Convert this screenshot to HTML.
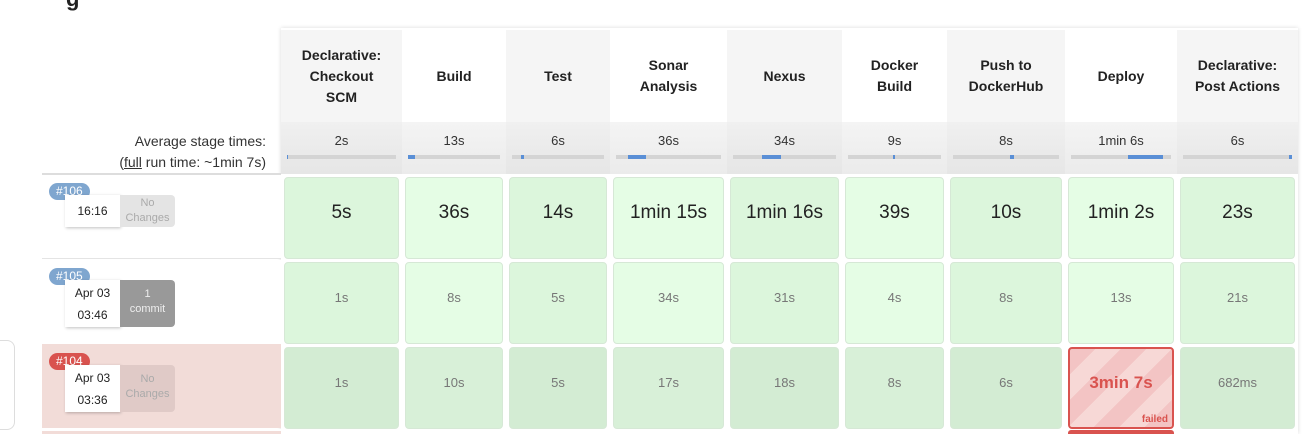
<!DOCTYPE html>
<html><head><meta charset="utf-8"><style>
*{box-sizing:border-box;margin:0;padding:0}
body{width:1316px;height:434px;overflow:hidden;background:#fff;font-family:"Liberation Sans","DejaVu Sans",sans-serif;position:relative;color:#333}
.abs{position:absolute}
.hd{position:absolute;top:30px;height:92px;display:flex;align-items:center;justify-content:center;text-align:center;font-weight:bold;font-size:14px;line-height:21px;color:#222}
.avg{position:absolute;top:122px;height:52px;text-align:center;font-size:13px;padding-top:11px;color:#333;background:linear-gradient(#f0f0f0,#e6e6e6)}
.bar{position:absolute;left:6px;right:6px;top:33px;height:4px;background:#d4d4d4}
.bar i{position:absolute;top:0;height:4px;background:#5a8fd6}
.c{position:absolute;border:1px solid #d6e8d6;border-radius:4px;display:flex;align-items:center;justify-content:center;color:#777;font-size:13px;padding-bottom:11px}
.big{font-size:19px;color:#222}
.row{position:absolute;left:42px;width:239px}
.badge{position:absolute;left:49px;height:17px;border-radius:9px;color:#fff;font-size:12px;padding:1px 7px;line-height:15px}
.date{position:absolute;left:65px;width:55px;background:#fff;box-shadow:1px 1px 3px rgba(0,0,0,.25);text-align:center;font-size:11px;color:#222}
.chg{position:absolute;left:120px;width:55px;border-radius:0 4px 4px 0;text-align:center;font-size:11px;line-height:15px}
</style></head><body>
<div class="abs" style="left:66px;top:-14px;width:30px;height:20px;font-size:22px;font-weight:bold;color:#222">g</div>
<div class="abs" style="left:281px;top:28px;width:1017px;height:406px;box-shadow:0 0 4px rgba(0,0,0,.15)"></div>

<div class="hd" style="left:281px;width:121px;background:#f5f5f5">Declarative:<br>Checkout<br>SCM</div>
<div class="hd" style="left:402px;width:104px;background:#fff">Build</div>
<div class="hd" style="left:506px;width:104px;background:#f5f5f5">Test</div>
<div class="hd" style="left:610px;width:117px;background:#fff">Sonar<br>Analysis</div>
<div class="hd" style="left:727px;width:115px;background:#f5f5f5">Nexus</div>
<div class="hd" style="left:842px;width:105px;background:#fff">Docker<br>Build</div>
<div class="hd" style="left:947px;width:118px;background:#f5f5f5">Push to<br>DockerHub</div>
<div class="hd" style="left:1065px;width:112px;background:#fff">Deploy</div>
<div class="hd" style="left:1177px;width:121px;background:#f5f5f5">Declarative:<br>Post Actions</div>

<div class="abs" style="left:60px;top:131px;width:206px;text-align:right;font-size:14px;line-height:21px;color:#333">Average stage times:<br>(<u>full</u> run time: ~1min 7s)</div>
<div class="abs" style="left:42px;top:173px;width:239px;height:2px;background:#ddd"></div>

<div class="avg" style="left:281px;width:121px">2s<div class="bar"><i style="left:0;width:1%"></i></div></div>
<div class="avg" style="left:402px;width:104px;background:linear-gradient(#f4f4f4,#ebebeb)">13s<div class="bar"><i style="left:0;width:8%"></i></div></div>
<div class="avg" style="left:506px;width:104px">6s<div class="bar"><i style="left:10%;width:3%"></i></div></div>
<div class="avg" style="left:610px;width:117px;background:linear-gradient(#f4f4f4,#ebebeb)">36s<div class="bar"><i style="left:11%;width:18%"></i></div></div>
<div class="avg" style="left:727px;width:115px">34s<div class="bar"><i style="left:28%;width:19%"></i></div></div>
<div class="avg" style="left:842px;width:105px;background:linear-gradient(#f4f4f4,#ebebeb)">9s<div class="bar"><i style="left:48%;width:3%"></i></div></div>
<div class="avg" style="left:947px;width:118px">8s<div class="bar"><i style="left:54%;width:4%"></i></div></div>
<div class="avg" style="left:1065px;width:112px;background:linear-gradient(#f4f4f4,#ebebeb)">1min 6s<div class="bar"><i style="left:57%;width:35%"></i></div></div>
<div class="avg" style="left:1177px;width:121px">6s<div class="bar"><i style="left:97%;width:3%"></i></div></div>

<div class="row" style="top:175px;height:84px;background:#fff;border-bottom:1px solid #e4e4e4"></div>
<div class="row" style="top:260px;height:84px;background:#fff"></div>
<div class="row" style="top:344px;height:84px;background:#f2dcd8"></div>
<div class="row" style="top:429px;height:5px;background:#f2dcd8;border-top:2px solid #fff"></div>
<div class="abs" style="left:-10px;top:340px;width:25px;height:90px;border:1px solid #ddd;border-radius:8px"></div>

<div class="badge" style="top:183px;background:#7fa6cf">#106</div>
<div class="date" style="top:195px;height:32px;line-height:32px;font-size:12px">16:16</div>
<div class="chg" style="top:195px;height:32px;background:#e4e4e4;color:#aaa;padding-top:1px">No<br>Changes</div>

<div class="badge" style="top:268px;background:#7fa6cf">#105</div>
<div class="date" style="top:280px;height:47px;line-height:22px;padding-top:2px;font-size:12px">Apr 03<br>03:46</div>
<div class="chg" style="top:280px;height:47px;background:#999;color:#eee;padding-top:7px">1<br>commit</div>

<div class="badge" style="top:353px;background:#d9534f">#104</div>
<div class="date" style="top:365px;height:47px;line-height:22px;padding-top:2px;font-size:12px">Apr 03<br>03:36</div>
<div class="chg" style="top:365px;height:47px;background:#e0cac7;color:#aaa;padding-top:7px">No<br>Changes</div>

<div id="grid"></div>
<script>
var cols=[[281,121],[402,104],[506,104],[610,117],[727,115],[842,105],[947,118],[1065,112],[1177,121]];
var rows=[[177,82,["5s","36s","14s","1min 15s","1min 16s","39s","10s","1min 2s","23s"],1],
[262,82,["1s","8s","5s","34s","31s","4s","8s","13s","21s"],0],
[347,82,["1s","10s","5s","17s","18s","8s","6s","3min 7s","682ms"],2]];
var h="";
rows.forEach(function(r){cols.forEach(function(c,i){
 var bg=(i%2==0)?"#dcf6dc":"#e5fde5";
 if(r[3]==2)bg=(i%2==0)?"#d3ecd3":"#d8f0d8";
 var st="left:"+(c[0]+3)+"px;top:"+r[0]+"px;width:"+(c[1]-6)+"px;height:"+r[1]+"px;background:"+bg+";";
 var cls="c"+(r[3]==1?" big":"");
 if(r[3]==2&&i==7){st+="background:repeating-linear-gradient(135deg,#f3c4c4 0 18px,#f7d8d6 18px 36px);border:2px solid #d9534f;color:#d9534f;font-weight:bold;font-size:17px;";
  h+='<div class="c" style="'+st+'">'+r[2][i]+'<span style="position:absolute;right:4px;bottom:2px;font-size:10px">failed</span></div>';return;}
 h+='<div class="'+cls+'" style="'+st+'">'+r[2][i]+'</div>';
});});
h+='<div class="abs" style="left:1068px;top:430px;width:106px;height:4px;background:#d9534f;border-radius:3px 3px 0 0"></div>';
document.getElementById("grid").innerHTML=h;
</script>
</body></html>
